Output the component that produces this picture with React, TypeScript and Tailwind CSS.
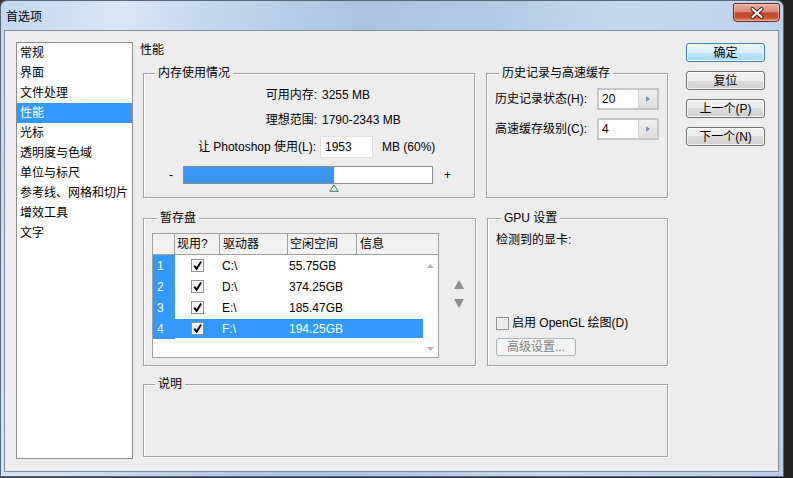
import React from "react";

const Group = ({
  title,
  className,
  titleClass,
  innerClass,
  children,
}: {
  title: string;
  className: string;
  titleClass?: string;
  innerClass?: string;
  children?: React.ReactNode;
}) => (
  <div className={`relative pt-[7px] ${className}`}>
    <div
      className={`h-full border border-[#a3a3a3] shadow-[inset_1px_1px_0_#ffffff,1px_1px_0_#ffffff] ${innerClass ?? ""}`}
    >
      {children}
    </div>
    <span
      className={`absolute top-0 bg-[#ededed] px-[3px] leading-[14px] ${titleClass ?? "left-[12px]"}`}
    >
      {title}
    </span>
  </div>
);

const CheckBox = ({ checked }: { checked: boolean }) => (
  <svg width="13" height="13" viewBox="0 0 13 13">
    <rect x="0.5" y="0.5" width="12" height="12" fill="#e6e6e6" stroke="#8e8f8f" />
    <rect x="1.5" y="1.5" width="10" height="10" fill="#f3f3f3" stroke="#fbfbfb" />
    {checked && (
      <path d="M3.3 6.6 L5.6 9.8 L10.2 2.6" stroke="#000" strokeWidth="1.9" fill="none" />
    )}
  </svg>
);

const Spinner = ({ value }: { value: string }) => (
  <div className="flex h-[22px] w-[62px] border-2 border-[#c6c6c6]">
    <div className="flex flex-1 items-center bg-white pl-[3px]">{value}</div>
    <div className="flex w-[19px] items-center justify-center border-l border-[#d4d4d4] bg-[linear-gradient(180deg,#f0f0f0,#dedede)]">
      <svg width="4" height="6" viewBox="0 0 4 6">
        <polygon points="0,0 4,3 0,6" fill="#8393ab" />
      </svg>
    </div>
  </div>
);

const Btn = ({ label, primary }: { label: string; primary?: boolean }) => (
  <div
    className={`flex h-[19px] w-[79px] items-center justify-center rounded-[3px] border shadow-[inset_0_0_0_1px_rgba(255,255,255,0.8)] ${
      primary
        ? "border-[#3c7fb1] bg-[linear-gradient(180deg,#eaf6fd_0%,#d9f0fc_50%,#bee6fd_50%,#a7d9f5_100%)]"
        : "border-[#707070] bg-[linear-gradient(180deg,#f2f2f2_0%,#ebebeb_50%,#dddddd_50%,#cfcfcf_100%)]"
    }`}
  >
    {label}
  </div>
);

const rows = [
  { n: "1", d: "C:\\", f: "55.75GB" },
  { n: "2", d: "D:\\", f: "374.25GB" },
  { n: "3", d: "E:\\", f: "185.47GB" },
  { n: "4", d: "F:\\", f: "194.25GB" },
];

const navItems = [
  "常规",
  "界面",
  "文件处理",
  "性能",
  "光标",
  "透明度与色域",
  "单位与标尺",
  "参考线、网格和切片",
  "增效工具",
  "文字",
];

export default function App() {
  return (
    <div className="h-[478px] w-[793px] bg-[linear-gradient(90deg,#3e3e3e,#232323)] font-['Liberation_Sans','Noto_Sans_CJK_SC',sans-serif] text-[12px] leading-[14px] text-black">
      <div className="flex h-[477px] w-[784px] flex-col rounded-t-[7px] border border-[#566779] bg-[linear-gradient(100deg,#c3d7ee_0%,#d9e6f5_14%,#c2d5ec_26%,#aac3e1_42%,#b0c8e4_55%,#c6d8ee_72%,#b9cfe9_100%)]">
        {/* title bar */}
        <div className="flex h-[29px] shrink-0 items-start justify-between">
          <span className="pl-[5px] pt-[9px]">首选项</span>
          <div className="mr-[3px] mt-[2px] flex h-[19px] w-[47px] items-center justify-center rounded-b-[4px] rounded-t-[2px] border border-[#6b2e22] bg-[linear-gradient(180deg,#eaae9f_0%,#de8a75_45%,#c8492c_52%,#c94d30_78%,#e3956f_100%)] shadow-[inset_0_0_0_1px_rgba(255,220,210,0.45)]">
            <svg width="16" height="12" viewBox="0 0 16 12">
              <path d="M3.5 2 L12.5 10 M12.5 2 L3.5 10" stroke="#4d1b12" strokeWidth="4" strokeLinecap="round" />
              <path d="M3.5 2 L12.5 10 M12.5 2 L3.5 10" stroke="#ffffff" strokeWidth="2.3" strokeLinecap="round" />
            </svg>
          </div>
        </div>

        {/* client area */}
        <div className="ml-[3px] flex h-[442px] w-[775px] border border-[#7d8ea3] bg-[#ededed] pl-[11px] pt-[11px]">
          {/* left list */}
          <div className="h-[417px] w-[117px] border border-[#8f8f8f] bg-white">
            {navItems.map((t, i) => (
              <div
                key={t}
                className={`flex h-[20px] items-center pl-[3px] ${i === 3 ? "bg-[#3399ff] text-white" : ""}`}
              >
                {t}
              </div>
            ))}
          </div>

          {/* content column */}
          <div className="ml-[7px] flex w-[528px] flex-col pt-[1px]">
            <div className="h-[14px]">性能</div>

            <div className="ml-[3px] mt-[9px] flex">
              <Group title="内存使用情况" className="h-[132px] w-[332px]" innerClass="pt-[14px]">
                <div className="flex h-[14px] items-center">
                  <span className="w-[173px] text-right">可用内存:</span>
                  <span className="ml-[5px]">3255 MB</span>
                </div>
                <div className="mt-[11px] flex h-[14px] items-center">
                  <span className="w-[173px] text-right">理想范围:</span>
                  <span className="ml-[5px]">1790-2343 MB</span>
                </div>
                <div className="mt-[9px] flex h-[22px] items-center">
                  <span className="w-[172px] text-right">让 Photoshop 使用(L):</span>
                  <div className="ml-[4px] flex h-[22px] w-[53px] items-center border border-[#e0e0e0] bg-white pl-[4px]">
                    1953
                  </div>
                  <span className="ml-[9px]">MB (60%)</span>
                </div>
                <div className="mt-[8px] flex h-[18px] items-center pl-[25px]">
                  <span className="w-[14px]">-</span>
                  <div className="relative flex h-[18px] w-[250px] border border-[#8c8c8c] bg-white">
                    <div className="h-full w-[150px] bg-[#3a96f3]" />
                    <svg
                      className="absolute left-[145px] top-[17px]"
                      width="10"
                      height="8"
                      viewBox="0 0 10 8"
                    >
                      <polygon points="5,0.8 9.2,7.3 0.8,7.3" fill="#eef3ee" stroke="#3f7a4f" strokeWidth="1" />
                    </svg>
                  </div>
                  <span className="ml-[11px]">+</span>
                </div>
              </Group>

              <Group
                title="历史记录与高速缓存"
                className="ml-[11px] h-[132px] w-[182px]"
                titleClass="left-[13px]"
                innerClass="pt-[14px]"
              >
                <div className="flex items-center pl-[8px]">
                  <span className="w-[102px]">历史记录状态(H):</span>
                  <Spinner value="20" />
                </div>
                <div className="mt-[8px] flex items-center pl-[8px]">
                  <span className="w-[102px]">高速缓存级别(C):</span>
                  <Spinner value="4" />
                </div>
              </Group>
            </div>

            <div className="ml-[3px] mt-[13px] flex">
              <Group title="暂存盘" className="h-[155px] w-[333px]" titleClass="left-[14px]" innerClass="flex pl-[8px] pt-[14px]">
                <div className="h-[125px] w-[287px] border border-[#a0a0a0] bg-white">
                  <div className="flex h-[21px] border-b border-[#a0a0a0] bg-[#f1f1f1]">
                    <div className="w-[22px] border-r border-[#a0a0a0]" />
                    <div className="flex w-[45px] items-center border-r border-[#a0a0a0] pl-[2px]">现用?</div>
                    <div className="flex w-[68px] items-center border-r border-[#a0a0a0] pl-[3px]">驱动器</div>
                    <div className="flex w-[69px] items-center border-r border-[#a0a0a0] pl-[2px]">空闲空间</div>
                    <div className="flex flex-1 items-center pl-[3px]">信息</div>
                  </div>
                  <div className="flex h-[102px]">
                    <div className="w-[270px]">
                      {rows.map((r, i) => (
                        <div key={r.n} className="flex h-[21px]">
                          <div className="flex w-[22px] items-center bg-[#3399ff] pl-[4px] text-white">{r.n}</div>
                          <div
                            className={`flex w-[248px] items-center ${i === 3 ? "my-[1px] bg-[#3399ff] text-white" : ""}`}
                          >
                            <div className="flex w-[45px] items-center justify-center pr-[1px]">
                              <CheckBox checked />
                            </div>
                            <div className="w-[68px] pl-[2px]">{r.d}</div>
                            <div className="w-[69px] pl-[1px]">{r.f}</div>
                            <div className="w-[66px]" />
                          </div>
                        </div>
                      ))}
                    </div>
                    <div className="flex w-[15px] flex-col items-center justify-between pb-[6px] pt-[9px]">
                      <svg width="7" height="4" viewBox="0 0 7 4">
                        <polygon points="3.5,0 7,4 0,4" fill="#b4b4b4" />
                      </svg>
                      <svg width="7" height="4" viewBox="0 0 7 4">
                        <polygon points="0,0 7,0 3.5,4" fill="#b4b4b4" />
                      </svg>
                    </div>
                  </div>
                </div>
                <div className="ml-[15px] flex flex-col gap-[10px] pt-[47px]">
                  <svg width="10" height="9" viewBox="0 0 10 9">
                    <polygon points="5,0 10,9 0,9" fill="#8f8f8f" />
                  </svg>
                  <svg width="10" height="9" viewBox="0 0 10 9">
                    <polygon points="0,0 10,0 5,9" fill="#8f8f8f" />
                  </svg>
                </div>
              </Group>

              <Group
                title="GPU 设置"
                className="ml-[11px] h-[155px] w-[181px]"
                titleClass="left-[14px]"
                innerClass="flex flex-col pl-[8px] pt-[14px]"
              >
                <div className="h-[14px]">检测到的显卡:</div>
                <div className="mt-[69px] flex h-[14px] items-center">
                  <svg width="13" height="13" viewBox="0 0 13 13">
                    <rect x="0.5" y="0.5" width="12" height="12" fill="#dedede" stroke="#8e8f8f" />
                    <rect x="1.5" y="1.5" width="10" height="10" fill="#ececec" stroke="#f6f6f6" />
                  </svg>
                  <span className="ml-[3px]">启用 OpenGL 绘图(D)</span>
                </div>
                <div className="mt-[8px] flex h-[18px] w-[80px] items-center justify-center rounded-[3px] border border-[#adb2b5] bg-[#f4f4f4] text-[#838383]">
                  高级设置...
                </div>
              </Group>
            </div>

            <Group title="说明" className="ml-[3px] mt-[11px] h-[80px] w-[525px]" titleClass="left-[12px]" />
          </div>

          {/* buttons */}
          <div className="ml-[18px] flex w-[79px] flex-col gap-[9px] pt-[1px]">
            <Btn label="确定" primary />
            <Btn label="复位" />
            <Btn label="上一个(P)" />
            <Btn label="下一个(N)" />
          </div>
        </div>
      </div>
    </div>
  );
}
